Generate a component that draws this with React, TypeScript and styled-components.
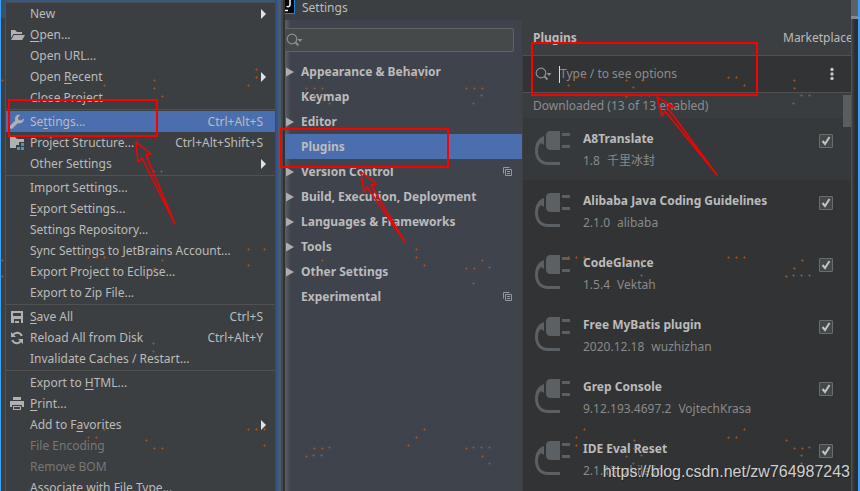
import React from "react";
import styled, { createGlobalStyle, css } from "styled-components";

const Global = createGlobalStyle`
  * { box-sizing: border-box; }
  html, body, #root { height: 100%; margin: 0; }
  body {
    overflow: hidden;
    background: #3c3f41;
    color: #bbbbbb;
    font-family: "Noto Sans", "Noto Sans CJK SC", sans-serif;
    font-size: 12px;
    line-height: 20px;
  }
  button, input { font: inherit; color: inherit; }
`;

const Desktop = styled.div`
  position: relative;
  display: flex;
  height: 100%;
  overflow: hidden;
`;

const EditorEdge = styled.div`
  flex: none;
  width: 6px;
  height: 100%;
  border-left: 1px solid #3fa0f5;
  border-right: 1px solid #2f568c;
  background: linear-gradient(#34536f 0 18px, #3a4045 18px);
`;

const MenuColumn = styled.div`
  flex: none;
  width: 269px;
  padding-top: 3px;
  background: linear-gradient(#36587c 0 2px, #4b4d4f 2px 3px, #3c3f41 3px);
`;

const MenuList = styled.div`
  display: flex;
  flex-direction: column;
`;

const MenuRow = styled.button<{ $selected?: boolean }>`
  display: grid;
  grid-template-columns: 24px 1fr auto;
  align-items: center;
  flex: none;
  height: 21px;
  padding: 0 12px 0 0;
  border: 0;
  text-align: left;
  white-space: nowrap;
  background: ${(p) => (p.$selected ? "#4b6eaf" : "transparent")};
  &:disabled { color: #777777; }
`;

const MenuIcon = styled.span`
  display: flex;
  padding-left: 3px;
`;

const SubmenuMark = styled.span`
  display: flex;
  margin-right: -4px;
`;

const Mnemonic = styled.span`
  text-decoration: underline;
  text-underline-offset: 2px;
`;

const Divider = styled.hr`
  flex: none;
  width: 100%;
  height: 3px;
  margin: 0;
  border: 0;
  background: linear-gradient(#3c3f41 0 1px, #515151 1px 2px, #3c3f41 2px);
`;

const WindowEdge = styled.div`
  flex: none;
  width: 10px;
  background: linear-gradient(90deg, #47494b 0 1px, #2f568c 1px 3px, #4a5b70 3px 6px, #43484b 6px 8px, #2f3335 8px 10px);
`;

const SettingsWindow = styled.section`
  flex: 1;
  min-width: 0;
  display: flex;
  flex-direction: column;
`;

const TitleBar = styled.header`
  flex: none;
  display: flex;
  gap: 7px;
  height: 20px;
  padding-bottom: 4px;
  align-items: center;
  > svg { align-self: flex-start; }
`;

const WindowBody = styled.div`
  flex: 1;
  min-height: 0;
  display: flex;
`;

const Sidebar = styled.nav`
  flex: 0 0 237px;
  padding-top: 8px;
  background: linear-gradient(90deg, #5a5e66 0, #3f434c 6px);
`;

const SidebarSearch = styled.label`
  display: flex;
  align-items: center;
  height: 24px;
  margin: 0 8px 7px 0;
  border: 1px solid #5f6560;
  border-left-color: #4b504f;
  border-radius: 3px;
  background: #45494a;
`;

const TextInput = styled.input`
  flex: 1;
  min-width: 0;
  height: 20px;
  padding: 0;
  border: 0;
  outline: 0;
  background: transparent;
  &::placeholder { color: #8c8c8c; opacity: 1; }
`;

const TreeRow = styled.button<{ $selected?: boolean }>`
  display: grid;
  grid-template-columns: 16px 1fr auto;
  align-items: center;
  width: 100%;
  height: 25px;
  padding: 0 10px 0 0;
  border: 0;
  font-weight: 700;
  text-align: left;
  white-space: nowrap;
  background: ${(p) => (p.$selected ? "#4b6eaf" : "transparent")};
`;

const PluginPane = styled.main`
  flex: 1;
  min-width: 0;
  margin-left: 1px;
  display: flex;
  flex-direction: column;
  overflow: hidden;
  background: #313335;
`;

const PaneHeader = styled.div`
  flex: none;
  display: flex;
  align-items: center;
  justify-content: space-between;
  height: 35px;
  padding-left: 10px;
  background: #3c3f41;
  overflow: hidden;
`;

const PaneTitle = styled.h1`
  margin: 0;
  font-size: 12px;
  line-height: 20px;
`;

const TabButton = styled.button`
  width: 68px;
  padding: 0;
  border: 0;
  background: none;
  text-align: left;
  white-space: nowrap;
  overflow: hidden;
`;

const SearchBar = styled.div`
  flex: none;
  display: flex;
  align-items: center;
  height: 38px;
  padding: 0 15px 0 12px;
  border: solid #515151;
  border-width: 1px 0;
`;

const SearchField = styled.label`
  flex: 1;
  display: flex;
  align-items: center;
  gap: 7px;
`;

const Caret = styled.span`
  width: 1px;
  height: 17px;
  margin-right: -7px;
  background: #dddddd;
`;

const IconButton = styled.button`
  display: flex;
  padding: 0;
  border: 0;
  background: none;
`;

const GroupHeader = styled.div`
  flex: none;
  display: flex;
  justify-content: space-between;
  height: 25px;
  padding: 2px 0 0 10px;
  color: #8c8c8c;
  background: #3a3d3f;
`;

const GroupTitle = styled.span`
  padding-top: 1px;
`;

const ScrollThumb = styled.span`
  width: 8px;
  height: 32px;
  flex: none;
  background: #5a5c5d;
  z-index: 1;
`;

const PluginRow = styled.div<{ $selected?: boolean }>`
  flex: none;
  display: grid;
  grid-template-columns: 48px 1fr 14px;
  height: 62px;
  padding: 11px 18px 0 12px;
  ${(p) => p.$selected && css`background: #36393b;`}
`;

const PluginName = styled.label`
  display: block;
  font-weight: 700;
  white-space: nowrap;
`;

const PluginMeta = styled.div`
  display: flex;
  gap: 7px;
  margin-top: 2px;
  color: #8a8a8a;
  white-space: nowrap;
`;

const Check = styled.input`
  appearance: none;
  display: block;
  width: 14px;
  height: 14px;
  margin: 5px 0 0;
  border: 1px solid #6b6b6b;
  border-radius: 1px;
  background: #43494a;
  &:not(:checked) + svg { display: none; }
`;

const CheckBox = styled.span`
  position: relative;
  height: 20px;
`;

const CheckMark = styled.svg`
  position: absolute;
  left: 0;
  top: 5px;
  pointer-events: none;
`;

const OuterEdge = styled.div`
  flex: none;
  width: 9px;
  border-right: 2px solid #3fa0f5;
  background:
    linear-gradient(#5c6164 0 16px, #85898d 16px 19px, transparent 19px),
    linear-gradient(90deg, #505254 0 1px, #414344 1px, #2b2d2e 4px);
`;

const Annotations = styled.svg`
  position: absolute;
  inset: 0;
  pointer-events: none;
`;

const Watermark = styled.div`
  position: absolute;
  right: 10px;
  bottom: 9px;
  font: 16px/20px "Liberation Sans", sans-serif;
  color: #cfcfcf;
  text-shadow: 1px 1px 1px #222222;
`;

const FolderIcon = () => (
  <svg width="16" height="16" viewBox="0 0 16 16" fill="#afb1b3">
    <path d="M2 3h4l2 2h5v2H4.500L2 11z" />
    <path d="M5 8h11l-2.800 5H2z" />
  </svg>
);
const WrenchIcon = () => (
  <svg width="16" height="16" viewBox="0 0 16 16" fill="#afb1b3">
    <path d="M14.600 4.200l-2.500 2.400-2.500-.700-.700-2.400L11.300 1C9.500.600 7.200 1 6.300 3.200c-.500 1.200-.3 2.300 0 3.200L1.100 11.700c-.8.900-.7 1.900 0 2.600.8.800 1.800.7 2.600 0l5.300-5.200c1.500.6 3.400.4 4.700-1 1-1.100 1.300-2.500.9-3.900z" />
  </svg>
);
const StructureIcon = () => (
  <svg width="16" height="16" viewBox="0 0 16 16">
    <path d="M1 2h5l2 2h7v3h-5v3H7v3H1z" fill="#afb1b3" />
    <path d="M12 8h3v3h-3zM8 12h3v3H8zM12 12h3v3h-3z" fill="#3e9ac9" />
  </svg>
);
const SaveIcon = () => (
  <svg width="16" height="16" viewBox="0 0 16 16" fill="#afb1b3">
    <path fillRule="evenodd" d="M2 2h12v12h-2v-4H5v4H2zM4 4v3h8V4z" />
    <path d="M6 12h4v2H6z" />
  </svg>
);
const ReloadIcon = () => (
  <svg width="16" height="16" viewBox="0 0 16 16" fill="none" stroke="#afb1b3" strokeWidth="2">
    <path d="M12.800 6A5 5 0 0 0 4 5M3.200 10A5 5 0 0 0 12 11" />
    <path d="M2 2v5h5zM14 14V9H9z" fill="#afb1b3" stroke="none" />
  </svg>
);
const PrintIcon = () => (
  <svg width="16" height="16" viewBox="0 0 16 16" fill="#afb1b3">
    <path d="M4 1h8v3H4zM1 5h14v6h-2V9H3v2H1z" />
    <path fillRule="evenodd" d="M4 10h8v4H4zM5 11v2h6v-2z" />
  </svg>
);
const MenuTriangle = () => (
  <svg width="8" height="10" viewBox="0 0 8 10">
    <path d="M2 0l5 5-5 5z" fill="#dfe1e5" />
  </svg>
);
const TreeTriangle = () => (
  <svg width="9" height="10" viewBox="0 0 9 10">
    <path d="M1 0.500l8 4.500-8 4.500z" fill="#adadad" />
  </svg>
);
const SearchIcon = () => (
  <svg width="17" height="16" viewBox="0 0 17 16" fill="none" stroke="#8a9196" strokeWidth="1.200">
    <circle cx="6" cy="7" r="4.800" />
    <path d="M9.500 10.500l3 3" strokeWidth="1.800" />
    <path d="M11.500 7h5l-2.500 3z" fill="#8a9196" stroke="none" />
  </svg>
);
const CopyIcon = () => (
  <svg width="9" height="9" viewBox="0 0 9 9" fill="none" stroke="#9299a1">
    <path d="M2.500 2.500h6v6h-6zM.500 6.500v-6h6M4 4.500h3M4 6.500h3" />
  </svg>
);
const MoreIcon = () => (
  <svg width="8" height="14" viewBox="0 0 8 14" fill="#c4c6c8">
    <circle cx="4" cy="2.500" r="1.700" />
    <circle cx="4" cy="7" r="1.700" />
    <circle cx="4" cy="11.500" r="1.700" />
  </svg>
);
const PlugIcon = () => (
  <svg width="36" height="37" viewBox="0 0 36 37" fill="#5a6064">
    <path d="M15 2h10v19H15c-2 0-4-2-4-4V6c0-2 2-4 4-4zM27 4h8v3h-8zM27 16h8v3h-8z" />
    <path d="M9 7v9l-3-2c-2 2-3 4-3 8 0 7 4 11 10 11h12v3H13C5 36 0 30 0 22 0 14 3 9 9 7z" />
  </svg>
);
const AppLogo = () => (
  <svg width="10" height="14" viewBox="0 0 10 14">
    <path d="M0 0h10v14H0z" fill="#1685ee" />
    <path d="M0 0h9v13H0z" fill="#080808" />
    <path d="M5 0v5c0 2-3 2-3 1M0 10.500h3" stroke="#fff" strokeWidth="1.500" fill="none" />
  </svg>
);

type Item = { text: string; keyChar?: number; shortcut?: string; sub?: boolean; icon?: React.ReactNode; selected?: boolean; off?: boolean };
const menu: Item[][] = [
  [
    { text: "New", sub: true },
    { text: "Open...", keyChar: 0, icon: <FolderIcon /> },
    { text: "Open URL..." },
    { text: "Open Recent", keyChar: 5, sub: true },
    { text: "Close Project" },
  ],
  [
    { text: "Settings...", keyChar: 2, shortcut: "Ctrl+Alt+S", icon: <WrenchIcon />, selected: true },
    { text: "Project Structure...", shortcut: "Ctrl+Alt+Shift+S", icon: <StructureIcon /> },
    { text: "Other Settings", sub: true },
  ],
  [
    { text: "Import Settings..." },
    { text: "Export Settings...", keyChar: 0 },
    { text: "Settings Repository..." },
    { text: "Sync Settings to JetBrains Account..." },
    { text: "Export Project to Eclipse..." },
    { text: "Export to Zip File..." },
  ],
  [
    { text: "Save All", keyChar: 0, shortcut: "Ctrl+S", icon: <SaveIcon /> },
    { text: "Reload All from Disk", shortcut: "Ctrl+Alt+Y", icon: <ReloadIcon /> },
    { text: "Invalidate Caches / Restart..." },
  ],
  [
    { text: "Export to HTML...", keyChar: 10 },
    { text: "Print...", keyChar: 0, icon: <PrintIcon /> },
    { text: "Add to Favorites", keyChar: 8, sub: true },
    { text: "File Encoding", off: true },
    { text: "Remove BOM", off: true },
    { text: "Associate with File Type..." },
  ],
];

const tree = [
  { text: "Appearance & Behavior", open: true },
  { text: "Keymap" },
  { text: "Editor", open: true },
  { text: "Plugins", selected: true },
  { text: "Version Control", open: true, copy: true },
  { text: "Build, Execution, Deployment", open: true },
  { text: "Languages & Frameworks", open: true },
  { text: "Tools", open: true },
  { text: "Other Settings", open: true },
  { text: "Experimental", copy: true },
];

const plugins = [
  ["A8Translate", "1.8", "千里冰封"],
  ["Alibaba Java Coding Guidelines", "2.1.0", "alibaba"],
  ["CodeGlance", "1.5.4", "Vektah"],
  ["Free MyBatis plugin", "2020.12.18", "wuzhizhan"],
  ["Grep Console", "9.12.193.4697.2", "VojtechKrasa"],
  ["IDE Eval Reset", "2.1.13", "zhile.io"],
];

const specks = [
  [2, 80], [104, 85], [154, 80], [154, 88], [162, 96], [256, 69], [256, 77], [248, 85],
  [153, 171], [161, 171], [248, 249], [264, 249], [248, 265], [88, 257], [96, 257], [104, 257], [162, 260], [154, 268], [146, 276], [2, 260], [2, 276],
  [153, 343], [153, 351], [104, 429], [248, 429], [256, 429], [264, 429], [88, 437], [96, 437], [146, 440], [154, 448], [162, 448], [264, 445],
  [306, 88], [314, 88], [322, 88], [314, 95], [322, 95], [329, 103], [416, 77], [424, 77], [409, 70], [466, 88], [474, 88], [482, 88], [481, 95], [473, 103],
  [416, 249], [416, 257], [424, 265], [322, 260], [314, 275], [322, 275], [329, 275], [466, 268], [474, 268], [482, 260], [489, 267], [473, 283],
  [424, 429], [416, 437], [408, 445], [314, 448], [322, 448], [329, 447], [306, 456], [313, 455], [321, 455], [466, 448], [473, 447], [481, 447], [489, 447], [482, 456], [489, 463],
  [568, 85], [576, 77], [584, 77], [626, 80], [642, 80], [633, 87], [626, 96], [641, 95], [649, 95], [728, 77], [736, 77], [744, 85], [794, 80], [794, 88], [801, 95], [809, 95], [793, 103],
  [568, 257], [576, 257], [584, 257], [626, 260], [634, 260], [642, 260], [641, 267], [641, 275], [649, 283], [728, 257], [736, 257], [744, 257], [802, 260], [794, 268], [786, 276], [793, 275], [801, 275], [809, 275],
  [584, 429], [576, 437], [576, 445], [634, 440], [634, 448], [626, 456], [641, 455], [633, 463], [744, 429], [736, 437], [728, 437], [786, 440], [794, 448], [802, 448], [809, 447], [801, 455], [801, 463],
];

const Label = ({ text, keyChar }: { text: string; keyChar?: number }) =>
  keyChar === undefined ? (
    <span>{text}</span>
  ) : (
    <span>
      {text.slice(0, keyChar)}
      <Mnemonic>{text[keyChar]}</Mnemonic>
      {text.slice(keyChar + 1)}
    </span>
  );

export default function App() {
  return (
    <>
      <Global />
      <Desktop>
        <EditorEdge />
        <MenuColumn>
          <MenuList>
            {menu.map((group, g) => (
              <React.Fragment key={g}>
                {g > 0 && <Divider />}
                {group.map((it) => (
                  <MenuRow key={it.text} $selected={it.selected} disabled={it.off}>
                    <MenuIcon>{it.icon}</MenuIcon>
                    <Label text={it.text} keyChar={it.keyChar} />
                    {it.sub ? (
                      <SubmenuMark>
                        <MenuTriangle />
                      </SubmenuMark>
                    ) : (
                      <span>{it.shortcut}</span>
                    )}
                  </MenuRow>
                ))}
              </React.Fragment>
            ))}
          </MenuList>
        </MenuColumn>
        <WindowEdge />
        <SettingsWindow>
          <TitleBar>
            <AppLogo />
            <span>Settings</span>
          </TitleBar>
          <WindowBody>
            <Sidebar>
              <SidebarSearch>
                <SearchIcon />
                <TextInput aria-label="Search settings" />
              </SidebarSearch>
              {tree.map((t) => (
                <TreeRow key={t.text} $selected={t.selected}>
                  {t.open ? <TreeTriangle /> : <span />}
                  <span>{t.text}</span>
                  {t.copy && <CopyIcon />}
                </TreeRow>
              ))}
            </Sidebar>
            <PluginPane>
              <PaneHeader>
                <PaneTitle>Plugins</PaneTitle>
                <TabButton>Marketplace</TabButton>
              </PaneHeader>
              <SearchBar>
                <SearchField>
                  <SearchIcon />
                  <Caret />
                  <TextInput aria-label="Search plugins" placeholder="Type / to see options" />
                </SearchField>
                <IconButton aria-label="More options">
                  <MoreIcon />
                </IconButton>
              </SearchBar>
              <GroupHeader>
                <GroupTitle>Downloaded (13 of 13 enabled)</GroupTitle>
                <ScrollThumb />
              </GroupHeader>
              {plugins.map(([name, version, author], i) => (
                <PluginRow key={name} $selected={i === 0}>
                  <PlugIcon />
                  <div>
                    <PluginName htmlFor={`plugin-${i}`}>{name}</PluginName>
                    <PluginMeta>
                      <span>{version}</span>
                      <span>{author}</span>
                    </PluginMeta>
                  </div>
                  <CheckBox>
                    <Check type="checkbox" id={`plugin-${i}`} defaultChecked />
                    <CheckMark width="14" height="14" viewBox="0 0 14 14" fill="none" stroke="#c4c4c4" strokeWidth="2">
                      <path d="M3.500 7l2.500 3 4.500-7" />
                    </CheckMark>
                  </CheckBox>
                </PluginRow>
              ))}
            </PluginPane>
          </WindowBody>
        </SettingsWindow>
        <OuterEdge />
        <Annotations width="860" height="491" viewBox="0 0 860 491" fill="none">
          <path d={specks.map(([x, y]) => `M${x - 1} ${y + 0.5}h3M${x + 0.5} ${y - 1}v3`).join("")} stroke="#a8521f" strokeOpacity="0.650" />
          <g stroke="#fb0000" strokeWidth="2">
            <path d="M9 100h148v36H9zM281 129h167v38H281zM532 43h225v52H532z" />
            <path
              d="M175 224L142 158l-4 4-2-20 15 12-5 1zM405 242l-38-55-3 5-3-20 16 12-6 1zM717 175l-52-64-3 5-5-19 17 10-7 0z"
              strokeWidth="1.500"
              strokeLinejoin="round"
            />
          </g>
        </Annotations>
        <Watermark>https://blog.csdn.net/zw764987243</Watermark>
      </Desktop>
    </>
  );
}
